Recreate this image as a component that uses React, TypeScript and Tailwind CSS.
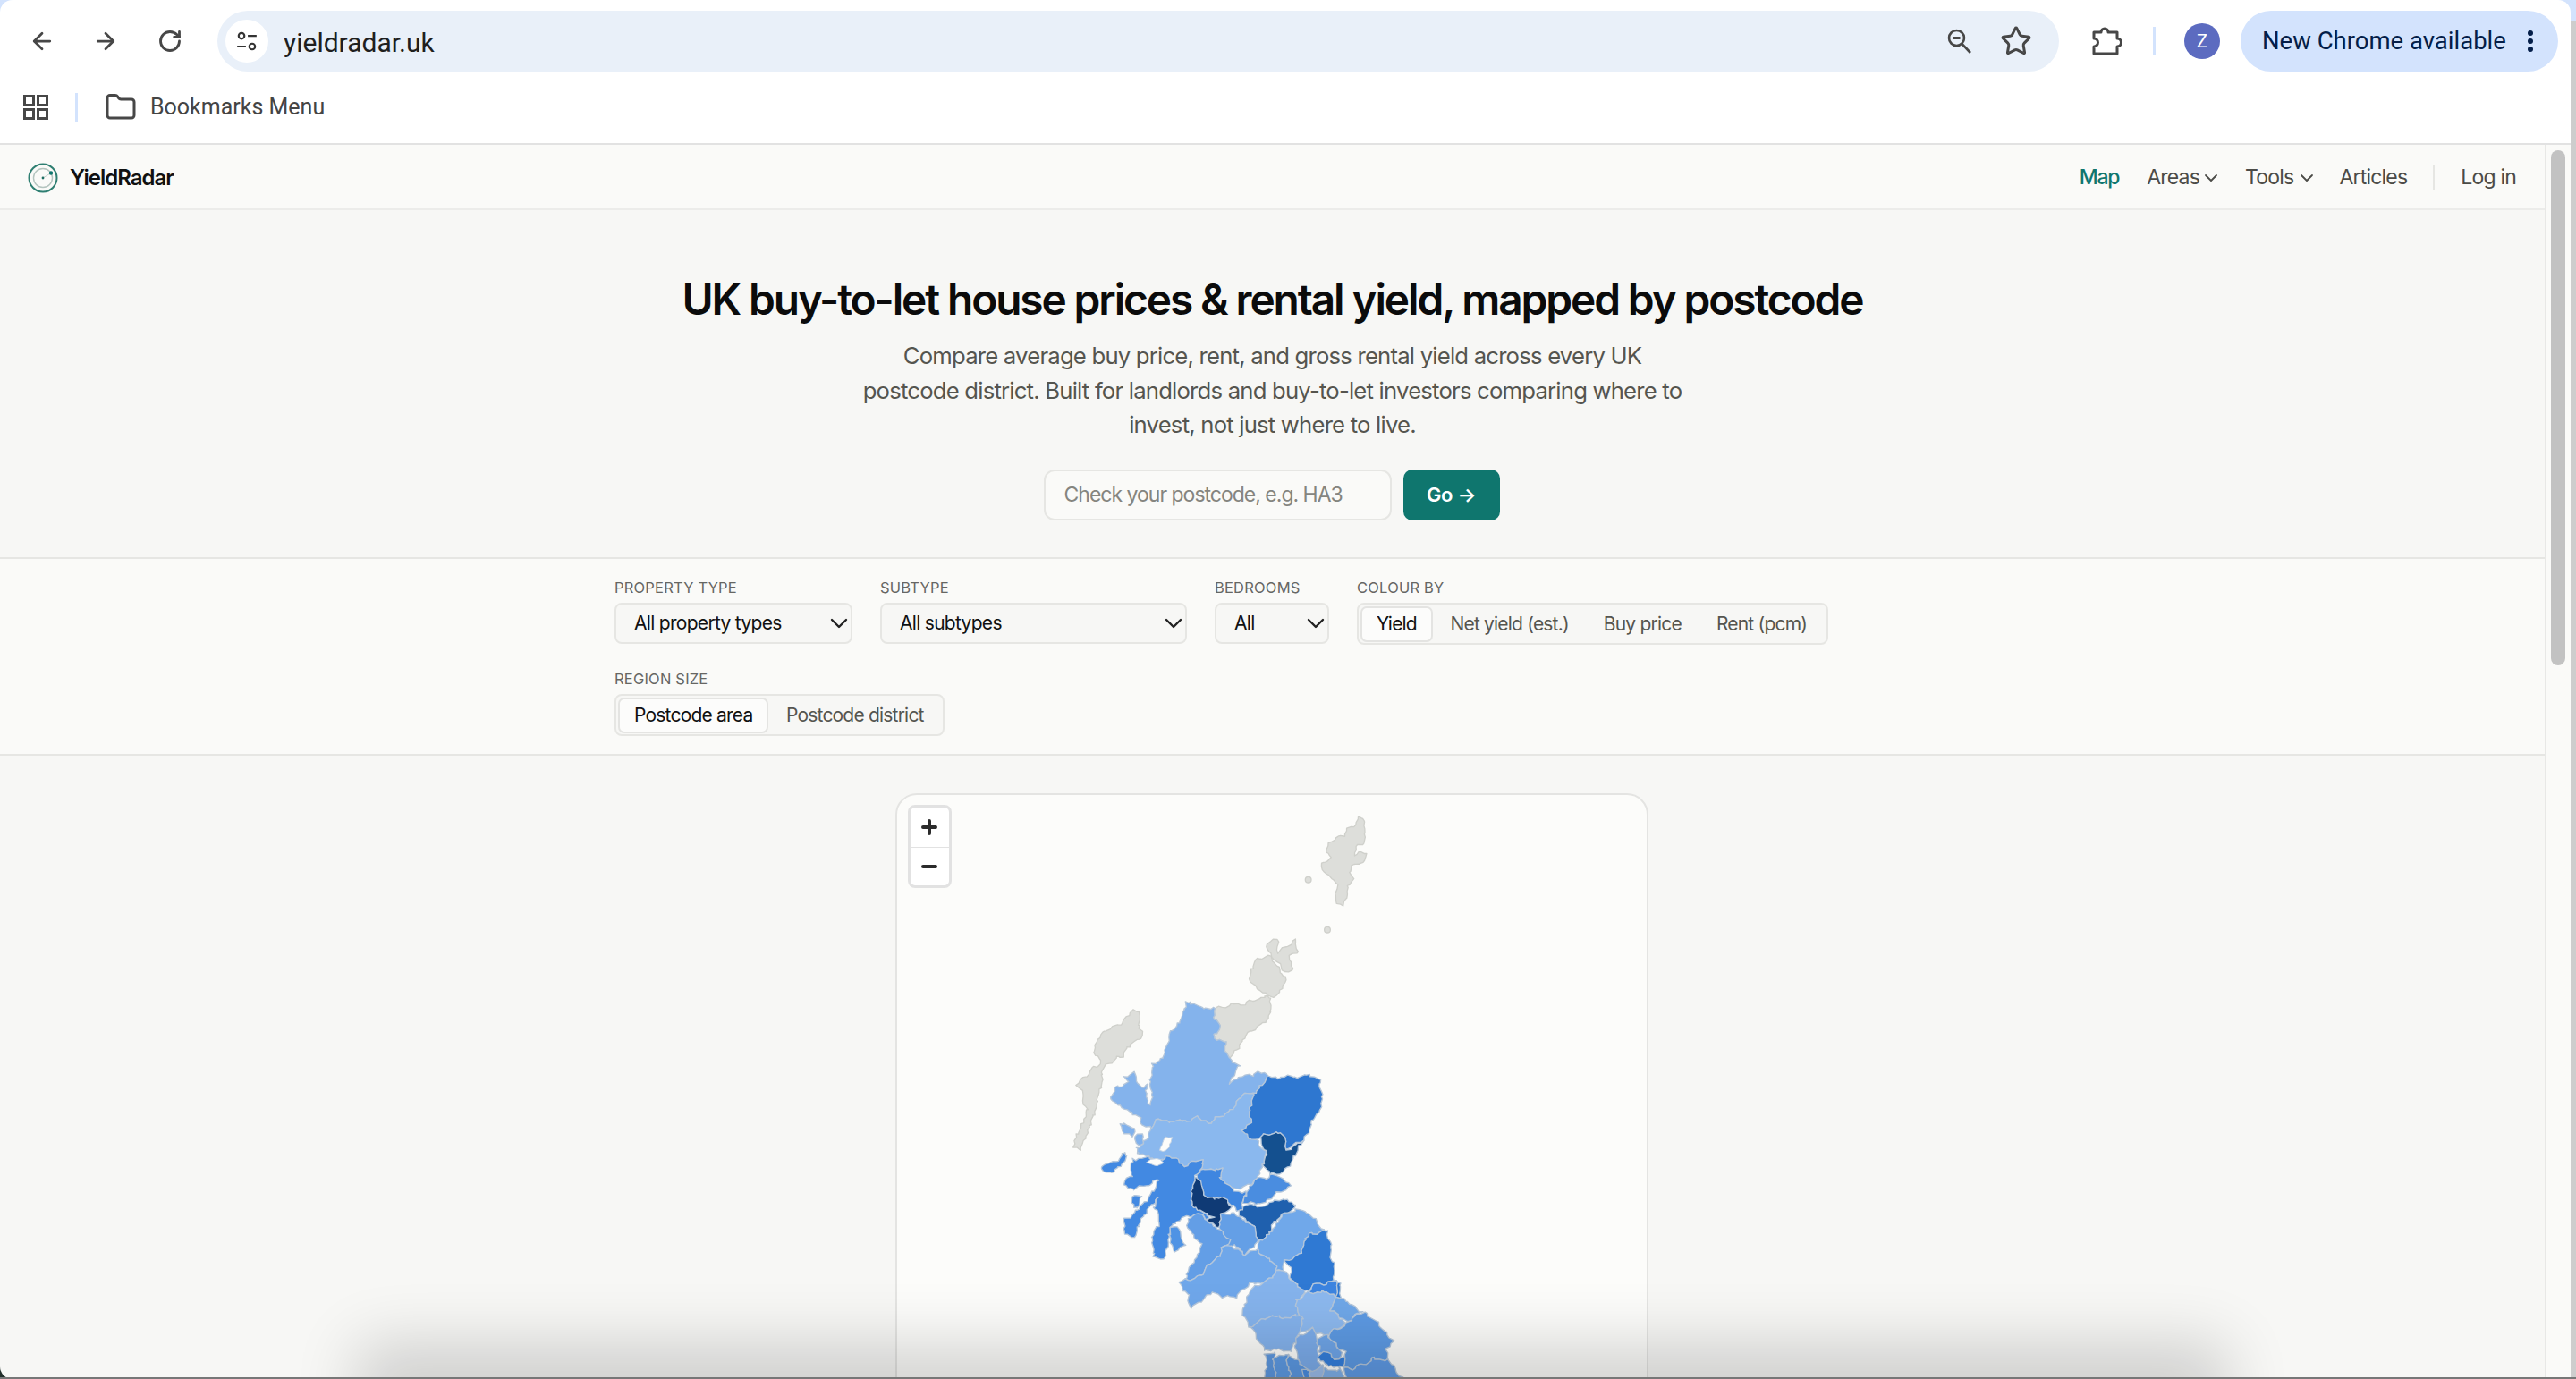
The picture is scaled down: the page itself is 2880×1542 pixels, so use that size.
import { ArrowLeft, ArrowRight, ChevronDown, Folder, RotateCw, Star } from 'lucide-react';

type Region = { fill: string; pts: string };

// traced from the picture, coordinates are 3x page px with origin 1150,1080
const regions: Region[] = [
  { fill: '#84b3ec', pts: '525,115 565,125 625,135 625,160 640,205 615,225 625,240 660,250 670,300 705,320 670,385 710,365 770,350 808,362 790,385 750,420 720,425 680,470 640,500 600,520 560,500 520,515 470,510 430,510 410,540 385,530 370,495 330,480 290,455 275,425 300,395 330,385 325,360 350,350 375,395 400,390 395,450 410,455 412,320 455,300 470,215 500,190' },
  { fill: '#8ab8ee', pts: '430,510 470,510 520,515 560,500 600,520 640,500 680,470 720,425 750,420 745,470 745,520 720,540 770,575 790,620 790,660 770,705 720,735 680,735 640,705 650,675 610,670 580,680 580,640 520,660 490,630 450,640 400,635 360,620 360,600 400,570 410,540' },
  { fill: '#80b1ec', pts: '305,525 340,525 360,545 350,565 325,550' },
  { fill: '#80b1ec', pts: '360,565 380,555 380,585 365,590' },
  { fill: '#2e77d0', pts: '808,362 860,365 930,360 970,365 985,410 975,480 945,510 945,550 920,575 880,600 860,600 855,560 820,550 775,565 750,575 720,540 745,520 745,470 750,420 790,385' },
  { fill: '#14508f', pts: '775,565 820,550 855,560 860,600 880,605 920,575 900,610 880,650 850,680 810,695 790,660 795,625 785,590' },
  { fill: '#4289e2', pts: '345,640 400,635 450,640 490,630 520,660 580,640 580,680 555,690 555,710 545,800 610,830 600,845 570,825 540,830 500,845 480,870 470,920 450,975 415,970 420,880 440,860 425,800 435,770 395,810 370,850 350,905 315,880 320,840 360,815 400,775 420,745 440,705 400,730 330,740 325,710 350,700 345,670' },
  { fill: '#4f93e4', pts: '480,870 500,870 525,930 495,945 475,920' },
  { fill: '#4289e2', pts: '245,660 290,650 330,615 330,640 300,670 260,690' },
  { fill: '#4289e2', pts: '350,770 375,760 365,800 350,800' },
  { fill: '#3f86e0', pts: '555,690 605,670 650,675 640,705 680,735 695,750 725,745 720,810 705,820 680,795 620,770 585,755 575,720' },
  { fill: '#0f3a75', pts: '555,705 575,710 585,755 620,770 660,775 680,805 650,830 640,875 600,850 620,830 545,800 550,760' },
  { fill: '#4a8de0', pts: '745,735 770,705 820,695 860,710 875,730 830,760 790,785 725,790 720,770' },
  { fill: '#1f60ae', pts: '710,820 725,795 790,795 830,775 870,780 895,800 860,820 820,855 810,895 770,910 760,870 710,830' },
  { fill: '#649fe6', pts: '680,815 710,835 760,870 770,910 750,940 730,960 690,925 660,940 640,900 640,875 650,830' },
  { fill: '#639ee6', pts: '545,830 570,825 600,850 640,880 675,910 650,940 640,970 600,1000 580,1030 530,1045 525,1020 560,970 575,930 535,860' },
  { fill: '#6fa7ea', pts: '680,925 730,960 765,935 790,960 825,985 830,1015 790,1050 740,1060 700,1100 655,1105 620,1085 590,1110 545,1135 530,1090 500,1050 530,1045 580,1030 600,1000 640,970 650,940' },
  { fill: '#70a8ea', pts: '770,910 810,895 860,820 900,810 940,825 985,880 925,900 915,950 860,985 855,1010 830,1015 825,985 790,960 765,935' },
  { fill: '#2f79d3', pts: '925,900 985,880 1005,885 1015,950 1030,1050 960,1060 925,1085 885,1055 880,1015 858,985 915,950' },
  { fill: '#3c84e0', pts: '930,1085 960,1060 1030,1050 1035,1105 985,1085' },
  { fill: '#2f79d3', pts: '1030,1050 1045,1055 1050,1100 1035,1105' },
  { fill: '#85b3ec', pts: '835,1020 855,1010 885,1055 925,1085 900,1110 895,1130 920,1165 855,1170 800,1170 745,1200 720,1160 740,1080 790,1050' },
  { fill: '#84b2ec', pts: '745,1200 800,1170 855,1170 920,1165 905,1220 895,1240 880,1280 820,1280 790,1275 765,1240' },
  { fill: '#8cb8ee', pts: '900,1110 930,1085 985,1085 1035,1105 1015,1150 1060,1190 1030,1210 1010,1225 970,1230 950,1210 905,1220 920,1165 895,1130' },
  { fill: '#6fa7e8', pts: '1050,1100 1120,1150 1070,1190 1015,1150 1035,1105' },
  { fill: '#5d9ae3', pts: '1070,1190 1125,1150 1170,1185 1220,1255 1195,1280 1210,1310 1150,1310 1090,1345 1060,1340 1060,1290 1030,1270 1010,1225 1030,1210' },
  { fill: '#6fa5e8', pts: '965,1245 1000,1225 1035,1270 1050,1290 1035,1310 1010,1300 975,1290' },
  { fill: '#357fdc', pts: '968,1300 1000,1290 1030,1310 1060,1300 1065,1340 1040,1340 1000,1325' },
  { fill: '#7cacea', pts: '895,1240 950,1210 970,1230 965,1290 980,1330 1000,1360 950,1380 905,1340' },
  { fill: '#5f9ae4', pts: '1090,1345 1150,1310 1210,1310 1235,1345 1255,1380 1060,1380 1060,1340' },
  { fill: '#5d98e0', pts: '795,1295 825,1285 825,1380 795,1380' },
  { fill: '#5e9be4', pts: '825,1300 870,1300 875,1380 825,1380' },
  { fill: '#5c99e3', pts: '870,1290 905,1320 935,1345 935,1370 915,1380 875,1380' },
  { fill: '#4a8de0', pts: '918,1350 945,1350 948,1380 918,1380' },
  { fill: '#9cbdea', pts: '948,1350 985,1335 1000,1365 990,1380 948,1380' },
  { fill: '#7fb0ea', pts: '990,1345 1050,1345 1060,1380 990,1380' },
];

const greyRegions = [
  '352,142 368,150 375,178 372,205 380,215 368,235 345,250 320,290 290,305 260,325 246,345 240,400 232,460 210,510 190,560 168,605 155,595 165,560 185,520 192,470 178,405 165,390 190,365 215,330 240,320 228,300 222,265 235,225 265,205 300,190 335,160',
  '625,135 660,125 730,115 770,100 812,95 805,160 790,180 745,210 700,270 670,300 660,250 625,240 615,225 640,205 625,160',
  '755,-20 800,-45 825,-20 845,0 860,40 830,90 800,90 755,60 745,40',
  '798,-80 830,-95 840,-55 890,-95 905,-60 880,-40 880,10 860,10 835,-20 810,-45',
];

const holes = [
  '440,610 460,565 480,565 470,600 450,615',
  '395,650 430,635 455,650 430,665',
];

const shetland = '265,62 288,72 285,120 288,150 260,155 250,190 270,180 292,188 285,205 268,220 245,225 240,250 248,270 230,292 225,330 212,358 195,350 188,320 195,290 180,270 150,248 140,215 165,210 178,195 155,178 165,150 190,130 220,125 230,100 250,95';

// breaks each edge up and bends it by position, so shared borders stay shared
const wiggle = (pts: string, amp = 4.5) => {
  const xy = pts.split(' ').map((p) => p.split(',').map(Number));
  const out: string[] = [];
  xy.forEach(([x, y], i) => {
    const [nx, ny] = xy[(i + 1) % xy.length];
    const steps = Math.max(1, Math.round(Math.hypot(nx - x, ny - y) / 9));
    for (let s = 0; s < steps; s++) {
      const px = x + ((nx - x) * s) / steps;
      const py = y + ((ny - y) * s) / steps;
      const dx = Math.sin(px * 0.13 + py * 0.07) + 0.6 * Math.sin(px * 0.31 - py * 0.23);
      const dy = Math.cos(px * 0.09 - py * 0.12) + 0.6 * Math.cos(px * 0.27 + py * 0.33);
      out.push(`${(px + dx * amp).toFixed(1)},${(py + dy * amp).toFixed(1)}`);
    }
  });
  return out.join(' ');
};

const UkMap = () => (
  <svg viewBox="1003 886 838 656" className="block h-[656px] w-[838px]">
    <g transform="translate(1150 1080) scale(0.3333)">
      {greyRegions.map((pts) => (
        <polygon key={pts} points={wiggle(pts)} fill="#dddeda" stroke="#cfd0cb" strokeWidth="4" strokeLinejoin="round" />
      ))}
      {regions.map((r) => (
        <polygon key={r.pts} points={wiggle(r.pts)} fill={r.fill} stroke="#b4c6da" strokeWidth="4" strokeLinejoin="round" />
      ))}
      {holes.map((pts) => (
        <polygon key={pts} points={wiggle(pts, 2)} fill="#fcfcfa" stroke="#c4d2e2" strokeWidth="3" />
      ))}
    </g>
    <g transform="translate(1430 890) scale(0.3333)" fill="#dddeda" stroke="#cfd0cb" strokeWidth="4" strokeLinejoin="round">
      <polygon points={wiggle(shetland, 2.5)} />
      <circle cx="98" cy="272" r="10" />
      <circle cx="162" cy="440" r="10" />
    </g>
  </svg>
);

const RadarLogo = () => (
  <svg viewBox="0 0 34 34" className="h-[34px] w-[34px]" fill="none">
    <circle cx="17" cy="17" r="15.5" stroke="#2f7f72" strokeWidth="2" />
    <circle cx="17" cy="17" r="10.5" stroke="#b4c4bf" strokeWidth="1.4" />
    <path d="M17 17L26 11.500" stroke="#c4d2ce" strokeWidth="1" />
    <circle cx="17" cy="17" r="1.4" fill="#1f6f63" />
    <circle cx="26" cy="11.500" r="2.2" fill="#0f766e" />
  </svg>
);

const TuneIcon = () => (
  <svg viewBox="0 0 24 24" className="h-[26px] w-[26px]" fill="none" stroke="#333" strokeWidth="2">
    <circle cx="6.5" cy="6.5" r="3" />
    <path d="M13 6.5h9M2 17.5h9" />
    <circle cx="17.5" cy="17.5" r="3" />
  </svg>
);

const AppsIcon = () => (
  <svg viewBox="0 0 28 28" className="h-7 w-7" fill="none" stroke="#474747" strokeWidth="3">
    <rect x="1.5" y="1.5" width="10" height="10" />
    <rect x="16.5" y="1.5" width="10" height="10" />
    <rect x="1.5" y="16.5" width="10" height="10" />
    <rect x="16.5" y="16.5" width="10" height="10" />
  </svg>
);

const ZoomOutIcon = () => (
  <svg viewBox="0 0 30 30" className="h-[30px] w-[30px]" fill="none" stroke="#474747" strokeWidth="2.6">
    <circle cx="11.5" cy="11.5" r="8.5" />
    <path d="M7.5 11.5h8" strokeWidth="3" />
    <path d="M17.5 18l9.5 10" />
  </svg>
);

const ExtensionIcon = () => (
  <svg viewBox="0 0 34 34" className="h-[34px] w-[34px]" fill="none" stroke="#474747" strokeWidth="3" strokeLinejoin="round">
    <path d="M3 7H11A4 4 0 0 1 19 7H29V14A4.500 4.500 0 0 1 29 23V31H3V23A4.500 4.500 0 0 0 3 14Z" />
  </svg>
);

const FieldLabel = ({ children }: { children: string }) => (
  <div className="mb-[7px] text-[16.5px] leading-[20px] tracking-[0.2px] text-[#666663] uppercase">{children}</div>
);

const SelectBox = ({ label, value, width }: { label: string; value: string; width: string }) => (
  <div>
    <FieldLabel>{label}</FieldLabel>
    <div className={`flex h-[46px] ${width} items-center justify-between rounded-[8px] border-2 border-[#e6e6e3] bg-[#f7f7f5] pl-[20px] text-[21px] tracking-[-0.7px] text-[#111]`}>
      <span>{value}</span>
      <ChevronDown size={32} strokeWidth={1.8} color="#222" className="mr-[-3px]" />
    </div>
  </div>
);

const Segment = ({ options, active }: { options: string[]; active: string }) => (
  <div className="flex h-[47px] items-center rounded-[8px] border-2 border-[#e6e6e3] bg-[#f7f7f5] p-[2px] text-[21px] tracking-[-0.8px]">
    {options.map((o) =>
      o === active ? (
        <span key={o} className="flex h-[40px] items-center rounded-[7px] border-2 border-[#e4e4e2] bg-[#fcfcfb] px-[16px] text-[#111]">
          {o}
        </span>
      ) : (
        <span key={o} className="px-[19.500px] text-[#55554f]">
          {o}
        </span>
      ),
    )}
  </div>
);

const App = () => (
  <div className="relative h-[1542px] w-[2880px] overflow-hidden bg-[linear-gradient(#d3e3fd_24px,#cdcdcd_24px)] font-['Inter',sans-serif]">
    {/* browser chrome */}
    <div className="h-[162px] w-[2874px] rounded-t-[14px] border-b-2 border-[#e2e2e2] bg-white font-['Roboto',sans-serif]">
      <div className="flex h-[92px] items-center">
        <div className="flex w-[243px] items-center pl-[32px] text-[#474747]">
          <ArrowLeft size={30} strokeWidth={2.2} />
          <ArrowRight size={30} strokeWidth={2.2} className="ml-[41px]" />
          <RotateCw size={28} strokeWidth={2.4} className="ml-[43px]" />
        </div>
        <div className="flex h-[68px] w-[2059px] items-center rounded-full bg-[#e9f0f9] pr-[30px] pl-[9px]">
          <div className="flex h-[48px] w-[48px] items-center justify-center rounded-full bg-white">
            <TuneIcon />
          </div>
          <span className="ml-[17px] pt-[2px] text-[30px] text-[#1f1f1f]">yieldradar.uk</span>
          <div className="ml-auto flex items-center gap-[30px] text-[#474747]">
            <ZoomOutIcon />
            <Star size={36} strokeWidth={2} />
          </div>
        </div>
        <div className="ml-[36px]">
          <ExtensionIcon />
        </div>
        <div className="ml-[35px] h-[32px] w-[3px] bg-[#d3e3fd]" />
        <div className="ml-[32px] flex h-[40px] w-[40px] items-center justify-center rounded-full bg-[#5c6bc0] text-[20px] text-white">Z</div>
        <div className="ml-[23px] flex h-[68px] w-[355px] items-center rounded-full bg-[#d3e3fd] pl-[24px] text-[#041e49]">
          <span className="text-[27.500px]">New Chrome available</span>
          <svg viewBox="0 0 6 24" className="ml-[24px] h-[24px] w-[6px]" fill="#041e49">
            <circle cx="3" cy="3" r="3" />
            <circle cx="3" cy="12" r="3" />
            <circle cx="3" cy="21" r="3" />
          </svg>
        </div>
      </div>
      <div className="flex h-[56px] items-center pl-[26px]">
        <AppsIcon />
        <div className="ml-[30px] h-[32px] w-[3px] bg-[#d3e3fd]" />
        <Folder size={36} strokeWidth={2} color="#474747" className="ml-[30px]" />
        <span className="ml-[15px] text-[25px] text-[#444]">Bookmarks Menu</span>
      </div>
    </div>

    <div className="relative flex h-[1380px]">
      <div className="absolute bottom-0 left-0 h-[16px] w-[16px] bg-[#22302c]" />
      {/* page */}
      <div className="relative w-[2845px] rounded-bl-[14px] bg-[#f7f7f5]">
        <nav className="flex h-[73px] items-center border-b-2 border-[#ececea] bg-[#fafaf8] pt-[2px] pr-[32px] pl-[31px] text-[23px] tracking-[-0.8px] text-[#4b4b47]">
          <RadarLogo />
          <span className="ml-[13px] text-[24px] font-semibold tracking-[-1px] text-[#111]">YieldRadar</span>
          <div className="ml-auto flex items-center">
            <span className="font-medium tracking-[-1.300px] text-[#0f766e]">Map</span>
            <span className="ml-[31px]">Areas</span>
            <ChevronDown size={24} strokeWidth={1.8} className="ml-[1px]" />
            <span className="ml-[26px]">Tools</span>
            <ChevronDown size={24} strokeWidth={1.8} className="ml-[3px]" />
            <span className="ml-[24px]">Articles</span>
            <div className="ml-[29px] h-[27px] w-[2px] bg-[#e6e6e3]" />
            <span className="ml-[29px]">Log in</span>
          </div>
        </nav>

        <section className="flex h-[390px] flex-col items-center border-b-2 border-[#e6e6e3] pt-[70px]">
          <h1 className="text-[47.800px] leading-[60px] font-semibold tracking-[-2.1px] text-[#0b0b0b]">
            UK buy-to-let house prices &amp; rental yield, mapped by postcode
          </h1>
          <p className="mt-[14px] w-[930px] text-center text-[25.700px] leading-[38.500px] tracking-[-0.8px] text-[#55554f]">
            Compare average buy price, rent, and gross rental yield across every UK postcode district. Built for landlords and buy-to-let investors comparing where to invest, not just where to live.
          </p>
          <div className="mt-[30px] mr-[2px] flex gap-[13px]">
            <input
              placeholder="Check your postcode, e.g. HA3"
              className="h-[57px] w-[389px] rounded-[12px] border-2 border-[#e6e6e3] bg-[#fafaf8] px-[21px] text-[23px] tracking-[-1px] placeholder:text-[#85857f]"
            />
            <button className="flex h-[57px] w-[108px] items-center justify-center rounded-[10px] bg-[#0f766e] text-[22px] font-semibold tracking-[-0.3px] text-white">
              Go →
            </button>
          </div>
        </section>

        <section className="h-[220px] border-b-2 border-[#e6e6e3] bg-[#fafaf8] pt-[22px] pl-[687px]">
          <div className="flex items-start gap-[31px]">
            <SelectBox label="Property type" value="All property types" width="w-[266px]" />
            <SelectBox label="Subtype" value="All subtypes" width="w-[343px]" />
            <SelectBox label="Bedrooms" value="All" width="w-[128px]" />
            <div>
              <FieldLabel>Colour by</FieldLabel>
              <Segment options={['Yield', 'Net yield (est.)', 'Buy price', 'Rent (pcm)']} active="Yield" />
            </div>
          </div>
          <div className="mt-[28px]">
            <FieldLabel>Region size</FieldLabel>
            <div className="w-fit">
              <Segment options={['Postcode area', 'Postcode district']} active="Postcode area" />
            </div>
          </div>
        </section>

        <section className="flex justify-center pt-[42px]">
          <div className="relative ml-[-2px] h-[800px] w-[842px] rounded-[24px] border-2 border-[#e4e4e2] bg-[#fcfcfa]">
            <div className="absolute top-[11px] left-[12px] flex w-[49px] flex-col overflow-hidden rounded-[8px] border-[3px] border-[#e2e2e2] bg-white">
              <div className="flex h-[45px] items-center justify-center border-b border-[#e2e2e2]">
                <svg viewBox="0 0 18 18" className="h-[18px] w-[18px]" stroke="#2b2b2b" strokeWidth="4" strokeLinecap="round">
                  <path d="M2 9h14M9 2v14" />
                </svg>
              </div>
              <div className="flex h-[42px] items-center justify-center">
                <svg viewBox="0 0 18 6" className="h-[6px] w-[18px]" stroke="#2b2b2b" strokeWidth="4" strokeLinecap="round">
                  <path d="M2 3h14" />
                </svg>
              </div>
            </div>
            <UkMap />
          </div>
        </section>
      </div>

      {/* scrollbar */}
      <div className="w-[29px] border-l-2 border-[#e8e8e6] bg-[#fafaf8] pt-[6px] pl-[5px]">
        <div className="h-[576px] w-[16px] rounded-full bg-[#c2c2c2]" />
      </div>
    </div>

    {/* window shadow along the bottom edge */}
    <div className="pointer-events-none absolute right-[430px] bottom-[-24px] left-[440px] h-[24px] shadow-[0_0_70px_40px_rgba(0,0,0,0.16)]" />
    <div className="absolute right-0 bottom-0 left-0 h-[2px] bg-[#777]" />
  </div>
);

export default App;
